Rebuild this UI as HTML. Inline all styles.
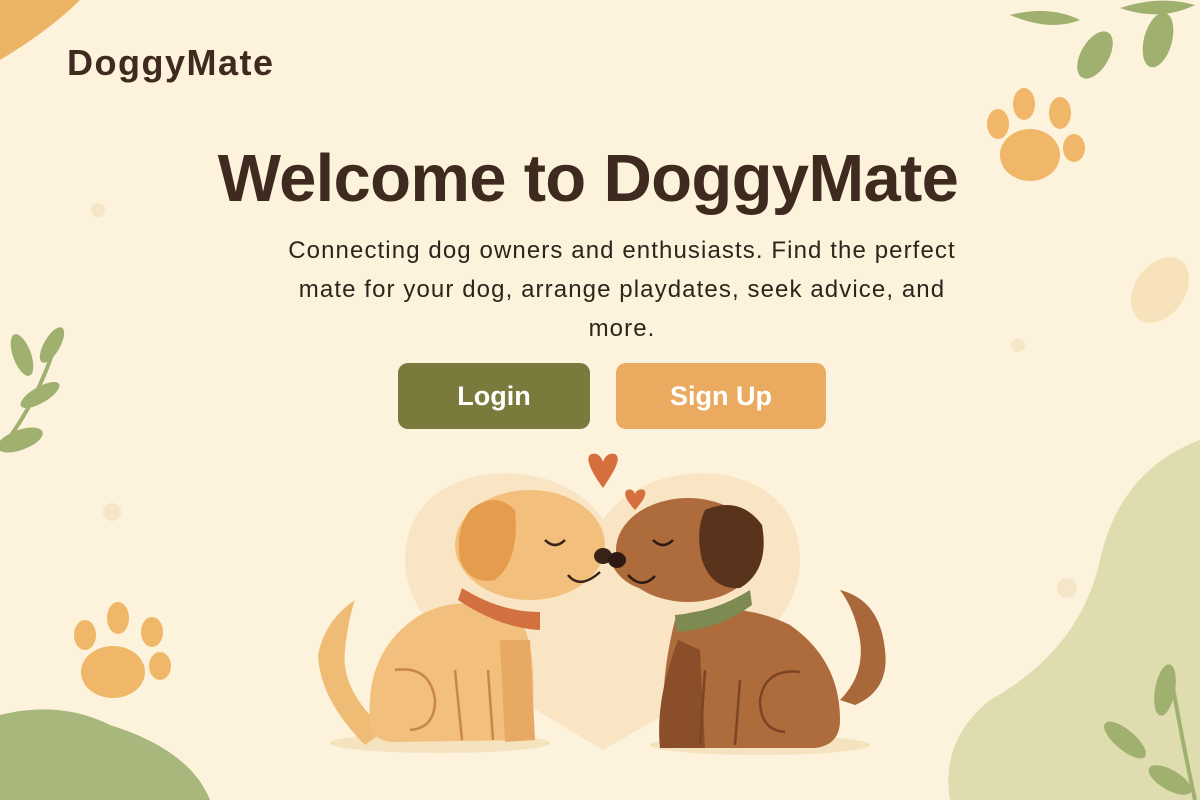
<!DOCTYPE html>
<html><head><meta charset="utf-8"><style>
html,body{margin:0;padding:0}
body{width:1200px;height:800px;overflow:hidden;background:#fdf2dc;position:relative;font-family:"Liberation Sans",sans-serif;color:#3e2a1f}
.logo{position:absolute;left:67px;top:42px;font-size:36px;font-weight:bold;letter-spacing:1.5px}
h1{position:absolute;left:0;width:1176px;top:140px;margin:0;text-align:center;font-size:67px;font-weight:bold;letter-spacing:-0.7px}
.sub{position:absolute;left:247px;width:750px;top:231px;text-align:center;font-size:24px;line-height:39px;color:#2f231c;letter-spacing:1.1px}
.btn{position:absolute;top:363px;height:66px;border-radius:10px;color:#fff;font-size:27px;font-weight:bold;display:flex;align-items:center;justify-content:center}
svg{position:absolute;left:0;top:0}
</style></head><body>
<svg width="1200" height="800">
<path d="M0 0 H80 Q50 30 0 60Z" fill="#ecb565"/>
<path d="M0 715 Q60 700 110 725 Q190 750 210 800 H0Z" fill="#a8b77c"/>
<path d="M1200 440 Q1120 470 1100 560 Q1080 650 990 700 Q940 740 950 800 H1200Z" fill="#dfdcb0"/>
<g fill="#9fb06f">
<path d="M1010 15 Q1050 5 1080 20 Q1050 32 1010 15Z"/>
<ellipse cx="1095" cy="55" rx="14" ry="26" transform="rotate(30 1095 55)"/>
<ellipse cx="1158" cy="40" rx="14" ry="28" transform="rotate(15 1158 40)"/>
<path d="M1120 8 Q1160 -5 1195 5 Q1160 22 1120 8Z"/>
<ellipse cx="22" cy="355" rx="9" ry="22" transform="rotate(-20 22 355)"/>
<ellipse cx="52" cy="345" rx="8" ry="20" transform="rotate(30 52 345)"/>
<ellipse cx="40" cy="395" rx="8" ry="22" transform="rotate(60 40 395)"/>
<ellipse cx="20" cy="440" rx="10" ry="24" transform="rotate(70 20 440)"/>
<ellipse cx="1165" cy="690" rx="10" ry="26" transform="rotate(10 1165 690)"/>
<ellipse cx="1125" cy="740" rx="10" ry="26" transform="rotate(-50 1125 740)"/>
<ellipse cx="1170" cy="780" rx="10" ry="24" transform="rotate(-60 1170 780)"/>
</g>
<path d="M0 450 Q40 400 60 330 M1195 800 Q1180 730 1170 670" stroke="#9fb06f" stroke-width="4" fill="none"/>
<g fill="#efb767">
<ellipse cx="1030" cy="155" rx="30" ry="26"/><ellipse cx="998" cy="124" rx="11" ry="15"/><ellipse cx="1024" cy="104" rx="11" ry="16"/><ellipse cx="1060" cy="113" rx="11" ry="16"/><ellipse cx="1074" cy="148" rx="11" ry="14"/>
<ellipse cx="113" cy="672" rx="32" ry="26"/><ellipse cx="85" cy="635" rx="11" ry="15"/><ellipse cx="118" cy="618" rx="11" ry="16"/><ellipse cx="152" cy="632" rx="11" ry="15"/><ellipse cx="160" cy="666" rx="11" ry="14"/>
</g>
<ellipse cx="1160" cy="290" rx="25" ry="36" transform="rotate(35 1160 290)" fill="#f8e2bc"/>
<g fill="#f6e6c8"><circle cx="98" cy="210" r="7"/><circle cx="1018" cy="345" r="7"/><circle cx="112" cy="512" r="9"/><circle cx="1067" cy="588" r="10"/></g>
<path d="M603 520 C560 450 405 455 405 560 C405 640 520 700 603 750 C690 700 800 640 800 560 C800 455 650 450 603 520Z" fill="#f9e5c3"/>
<path d="M603 488 C590 470 584 456 592 454 C598 452 602 458 603 462 C604 458 608 452 615 454 C622 458 615 470 603 488Z" fill="#d56f3e"/>
<path d="M635 510 C628 502 622 494 627 490 C631 488 634 491 635 494 C636 491 640 488 644 490 C648 494 642 502 635 510Z" fill="#d56f3e"/>
<ellipse cx="440" cy="743" rx="110" ry="10" fill="#f5e3c0"/><ellipse cx="760" cy="745" rx="110" ry="10" fill="#f5e3c0"/>
<path d="M355 600 Q325 620 318 655 Q320 700 365 745 L385 730 Q340 690 345 650 Q348 620 355 600Z" fill="#efbc76"/>
<path d="M370 720 Q365 650 420 615 Q470 590 500 620 L520 620 Q540 650 530 740 L395 742 Q370 742 370 720Z" fill="#f2c07c"/>
<path d="M500 640 L530 640 L535 740 L505 742Z" fill="#e7a963"/>
<ellipse cx="530" cy="545" rx="75" ry="55" fill="#f2c07c"/>
<path d="M520 520 Q575 515 600 545 Q605 575 575 585 Q530 595 520 560Z" fill="#f2c07c"/>
<path d="M470 510 Q495 490 515 510 Q520 560 495 580 Q470 585 460 560 Q455 530 470 510Z" fill="#e59c4d"/>
<path d="M462 588 Q500 612 540 612 L540 630 Q500 628 458 600Z" fill="#d2703f"/>
<path d="M545 540 Q555 550 565 540" stroke="#3a2218" stroke-width="2.5" fill="none"/>
<path d="M568 575 Q580 590 600 572" stroke="#3a2218" stroke-width="2.5" fill="none"/>
<ellipse cx="603" cy="556" rx="9" ry="8" fill="#3a2218"/>
<path d="M395 670 Q430 665 435 700 Q435 728 410 730 M455 670 L462 740 M488 670 L493 740" stroke="#c88845" stroke-width="2.5" fill="none"/>
<path d="M840 590 Q880 600 885 650 Q890 690 855 705 L840 700 Q865 675 860 640 Q855 610 840 590Z" fill="#a9683a"/>
<path d="M680 615 Q740 600 790 625 Q840 660 840 720 Q840 745 815 748 L670 748 Q655 700 675 620Z" fill="#ae6b3b"/>
<path d="M678 640 L700 650 L705 748 L660 748 Q655 700 678 640Z" fill="#8a4e2a"/>
<ellipse cx="688" cy="550" rx="72" ry="52" fill="#ae6b3b"/>
<path d="M660 530 Q620 540 612 565 Q625 590 660 592Z" fill="#ae6b3b"/>
<path d="M705 510 Q740 495 762 525 Q770 570 740 588 Q712 590 702 560 Q695 530 705 510Z" fill="#5a331d"/>
<path d="M675 615 Q715 612 750 590 L752 605 Q718 630 676 632Z" fill="#7d8a52"/>
<path d="M653 540 Q663 550 673 540" stroke="#2e1a12" stroke-width="2.5" fill="none"/>
<path d="M628 575 Q642 590 655 576" stroke="#2e1a12" stroke-width="2.5" fill="none"/>
<ellipse cx="617" cy="560" rx="9" ry="8" fill="#2e1a12"/>
<path d="M800 672 Q765 668 760 700 Q760 730 785 732 M740 680 L735 745 M705 670 L700 745" stroke="#7d4525" stroke-width="2.5" fill="none"/>
</svg>
<div class="logo">DoggyMate</div>
<h1>Welcome to DoggyMate</h1>
<div class="sub">Connecting dog owners and enthusiasts. Find the perfect<br>mate for your dog, arrange playdates, seek advice, and<br>more.</div>
<div class="btn" style="left:398px;width:192px;background:#7a7a3c">Login</div>
<div class="btn" style="left:616px;width:210px;background:#eaab60">Sign Up</div>
</body></html>
